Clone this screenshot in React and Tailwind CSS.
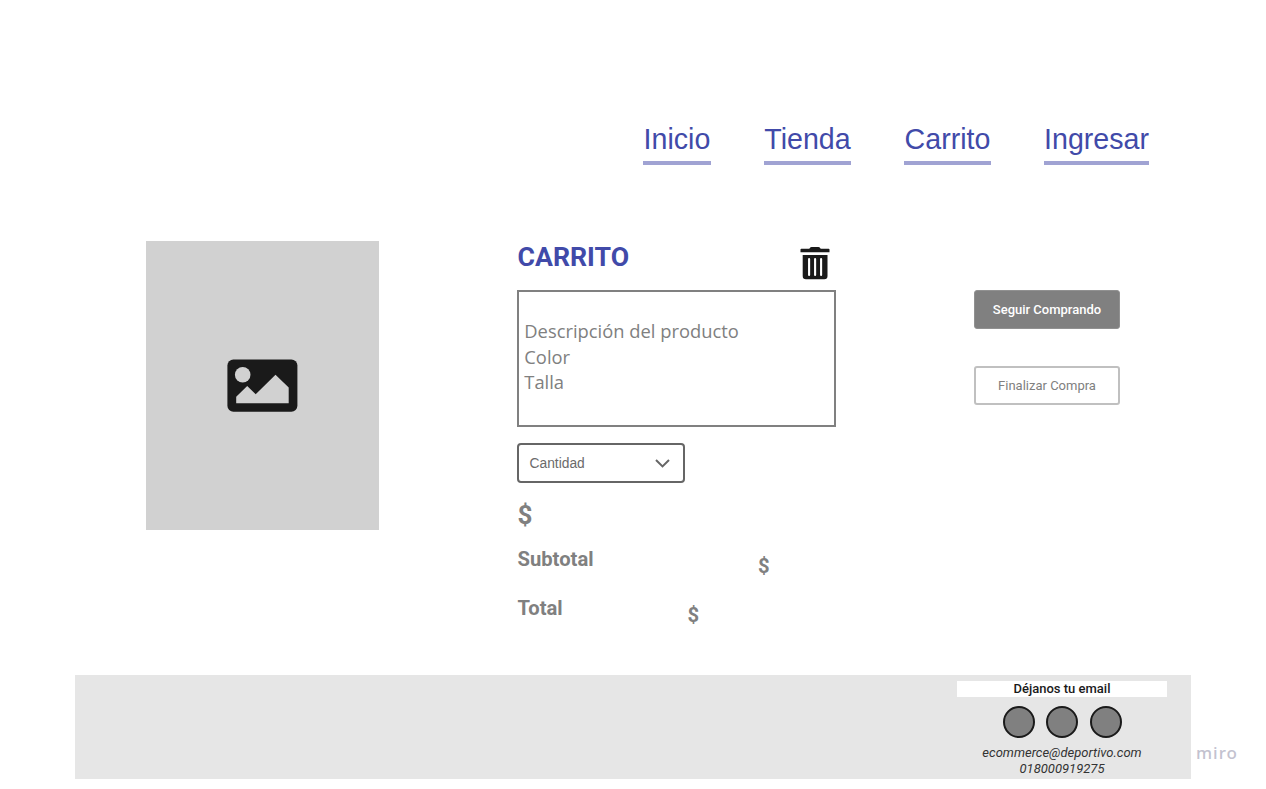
function NavLink({ children, width }) {
  return (
    <a
      href="#"
      className={`${width} flex h-[45px] justify-center border-b-4 border-[#a0a3d3] font-['Liberation_Sans',sans-serif] text-[28.6px] leading-[38px] whitespace-nowrap text-[#414aa9]`}
    >
      {children}
    </a>
  );
}

function Nav() {
  return (
    <nav className="flex pt-[120px] pl-[643px]">
      <NavLink width="w-[68px] mr-[53px]">Inicio</NavLink>
      <NavLink width="w-[87px] mr-[53px]">Tienda</NavLink>
      <NavLink width="w-[87px] mr-[53px]">Carrito</NavLink>
      <NavLink width="w-[105px]">Ingresar</NavLink>
    </nav>
  );
}

function ImageIcon() {
  return (
    <svg width="71" height="53" viewBox="0 0 71 53" className="block">
      <rect x="0.4" y="0.4" width="70" height="52.3" rx="6" fill="#1a1a1a" />
      <circle cx="15.7" cy="15.7" r="7.8" fill="#d1d1d1" />
      <path d="M9.2 44.2V37.7L20.2 26.9L28.7 35.2L48.5 15.7L61.7 28.5V44.2Z" fill="#d1d1d1" />
    </svg>
  );
}

function TrashIcon() {
  return (
    <svg width="30" height="33" viewBox="-0.5 0 30 33" className="block">
      <path
        d="M0 2.5Q0 1.7 .8 1.7H8.8Q9.5 0 11 0H18Q19.5 0 20.2 1.7H28.2Q29 1.7 29 2.5V5.2H0ZM2.2 8H27V29Q27 32.3 23.8 32.3H5.5Q2.2 32.3 2.2 29Z"
        fill="#1a1a1a"
      />
      <path d="M8.6 12V28M14.6 12V28M20.6 12V28" stroke="#fff" strokeWidth="2.1" strokeLinecap="round" />
    </svg>
  );
}

function Cart() {
  return (
    <section className="ml-[138px] w-[319px] font-[Roboto,sans-serif] font-bold text-[#808080]">
      <div className="flex h-[49px] justify-between pr-[6px] pl-[0.5px]">
        <h1 className="text-[26.7px] leading-[32px] text-[#414aa9]">CARRITO</h1>
        <div className="pt-[5.5px]">
          <TrashIcon />
        </div>
      </div>
      <div className="h-[137px] border-2 border-[#808080] pt-[26px] pl-[5.3px] font-['Open_Sans',sans-serif] text-[18.35px] leading-[25.5px] font-normal">
        <p>Descripción del producto</p>
        <p>Color</p>
        <p>Talla</p>
      </div>
      <button className="mt-4 flex h-10 w-[168px] items-center justify-between rounded-[4px] border-2 border-[#666] pr-[13px] pl-[10.5px] font-['Liberation_Sans',sans-serif] text-[13.8px] font-normal text-[#6b6b6b]">
        <span className="pt-px leading-[20px]">Cantidad</span>
        <svg width="15" height="9" viewBox="0 0 15 9" fill="none" stroke="#666" strokeWidth="2">
          <path d="M1 1L7.5 7.4L14 1" />
        </svg>
      </button>
      <div className="mt-[15px] h-[34px] pl-[0.5px] text-[26px] leading-[34px]">$</div>
      <div className="mt-[14px] flex h-[26px] pl-[0.5px] text-[20.2px] leading-[26px]">
        <span className="w-[240.5px]">Subtotal</span>
        <span className="pt-[7px]">$</span>
      </div>
      <div className="mt-[23px] flex h-[26px] pl-[0.5px] text-[20.2px] leading-[26px]">
        <span className="w-[170px]">Total</span>
        <span className="pt-[7px]">$</span>
      </div>
    </section>
  );
}

function Actions() {
  return (
    <aside className="mt-[49px] ml-[138px] flex w-[146px] flex-col gap-[37px] font-[Roboto,sans-serif] text-[13px]">
      <button className="h-[39px] rounded-[3px] border border-[#919191] bg-[#808080] font-medium whitespace-nowrap text-white">
        Seguir Comprando
      </button>
      <button className="h-[39px] rounded-[3px] border-2 border-[#c0c0c0] whitespace-nowrap text-[#808080]">
        Finalizar Compra
      </button>
    </aside>
  );
}

function Footer() {
  return (
    <footer className="flex pl-[75px] font-[Roboto,sans-serif] text-[13px] text-[#1a1a1a]">
      <div className="flex h-[104px] w-[1116px] flex-col items-end bg-[#e6e6e6] pt-[6px] pr-[24px]">
        <div className="flex w-[210px] flex-col items-center">
          <div className="h-4 w-full bg-white text-center leading-[16px] font-medium">Déjanos tu email</div>
          <div className="mt-[8.5px] flex h-8 gap-[11.5px]">
            <span className="mt-[0.5px] size-8 rounded-full border-2 border-[#1a1a1a] bg-[#808080]" />
            <span className="size-8 rounded-full border-2 border-[#1a1a1a] bg-[#808080]" />
            <span className="size-8 rounded-full border-2 border-[#1a1a1a] bg-[#808080]" />
          </div>
          <p className="mt-[7.5px] text-center leading-[16px] font-normal text-[#333] italic">
            ecommerce@deportivo.com
            <br />
            018000919275
          </p>
        </div>
      </div>
      <span className="mt-[66px] ml-[5px] font-['Noto_Sans',sans-serif] text-[17px] leading-[24px] font-medium tracking-[1px] text-[#c3c2cf]">
        miro
      </span>
    </footer>
  );
}

export default function App() {
  return (
    <div className="h-[789px] w-[1266px] overflow-hidden bg-white">
      <Nav />
      <main className="flex h-[434px] pt-[76px] pl-[146px]">
        <div className="flex h-[289px] w-[233px] items-center justify-center bg-[#d1d1d1]">
          <ImageIcon />
        </div>
        <Cart />
        <Actions />
      </main>
      <div className="mt-[76px]">
        <Footer />
      </div>
    </div>
  );
}
